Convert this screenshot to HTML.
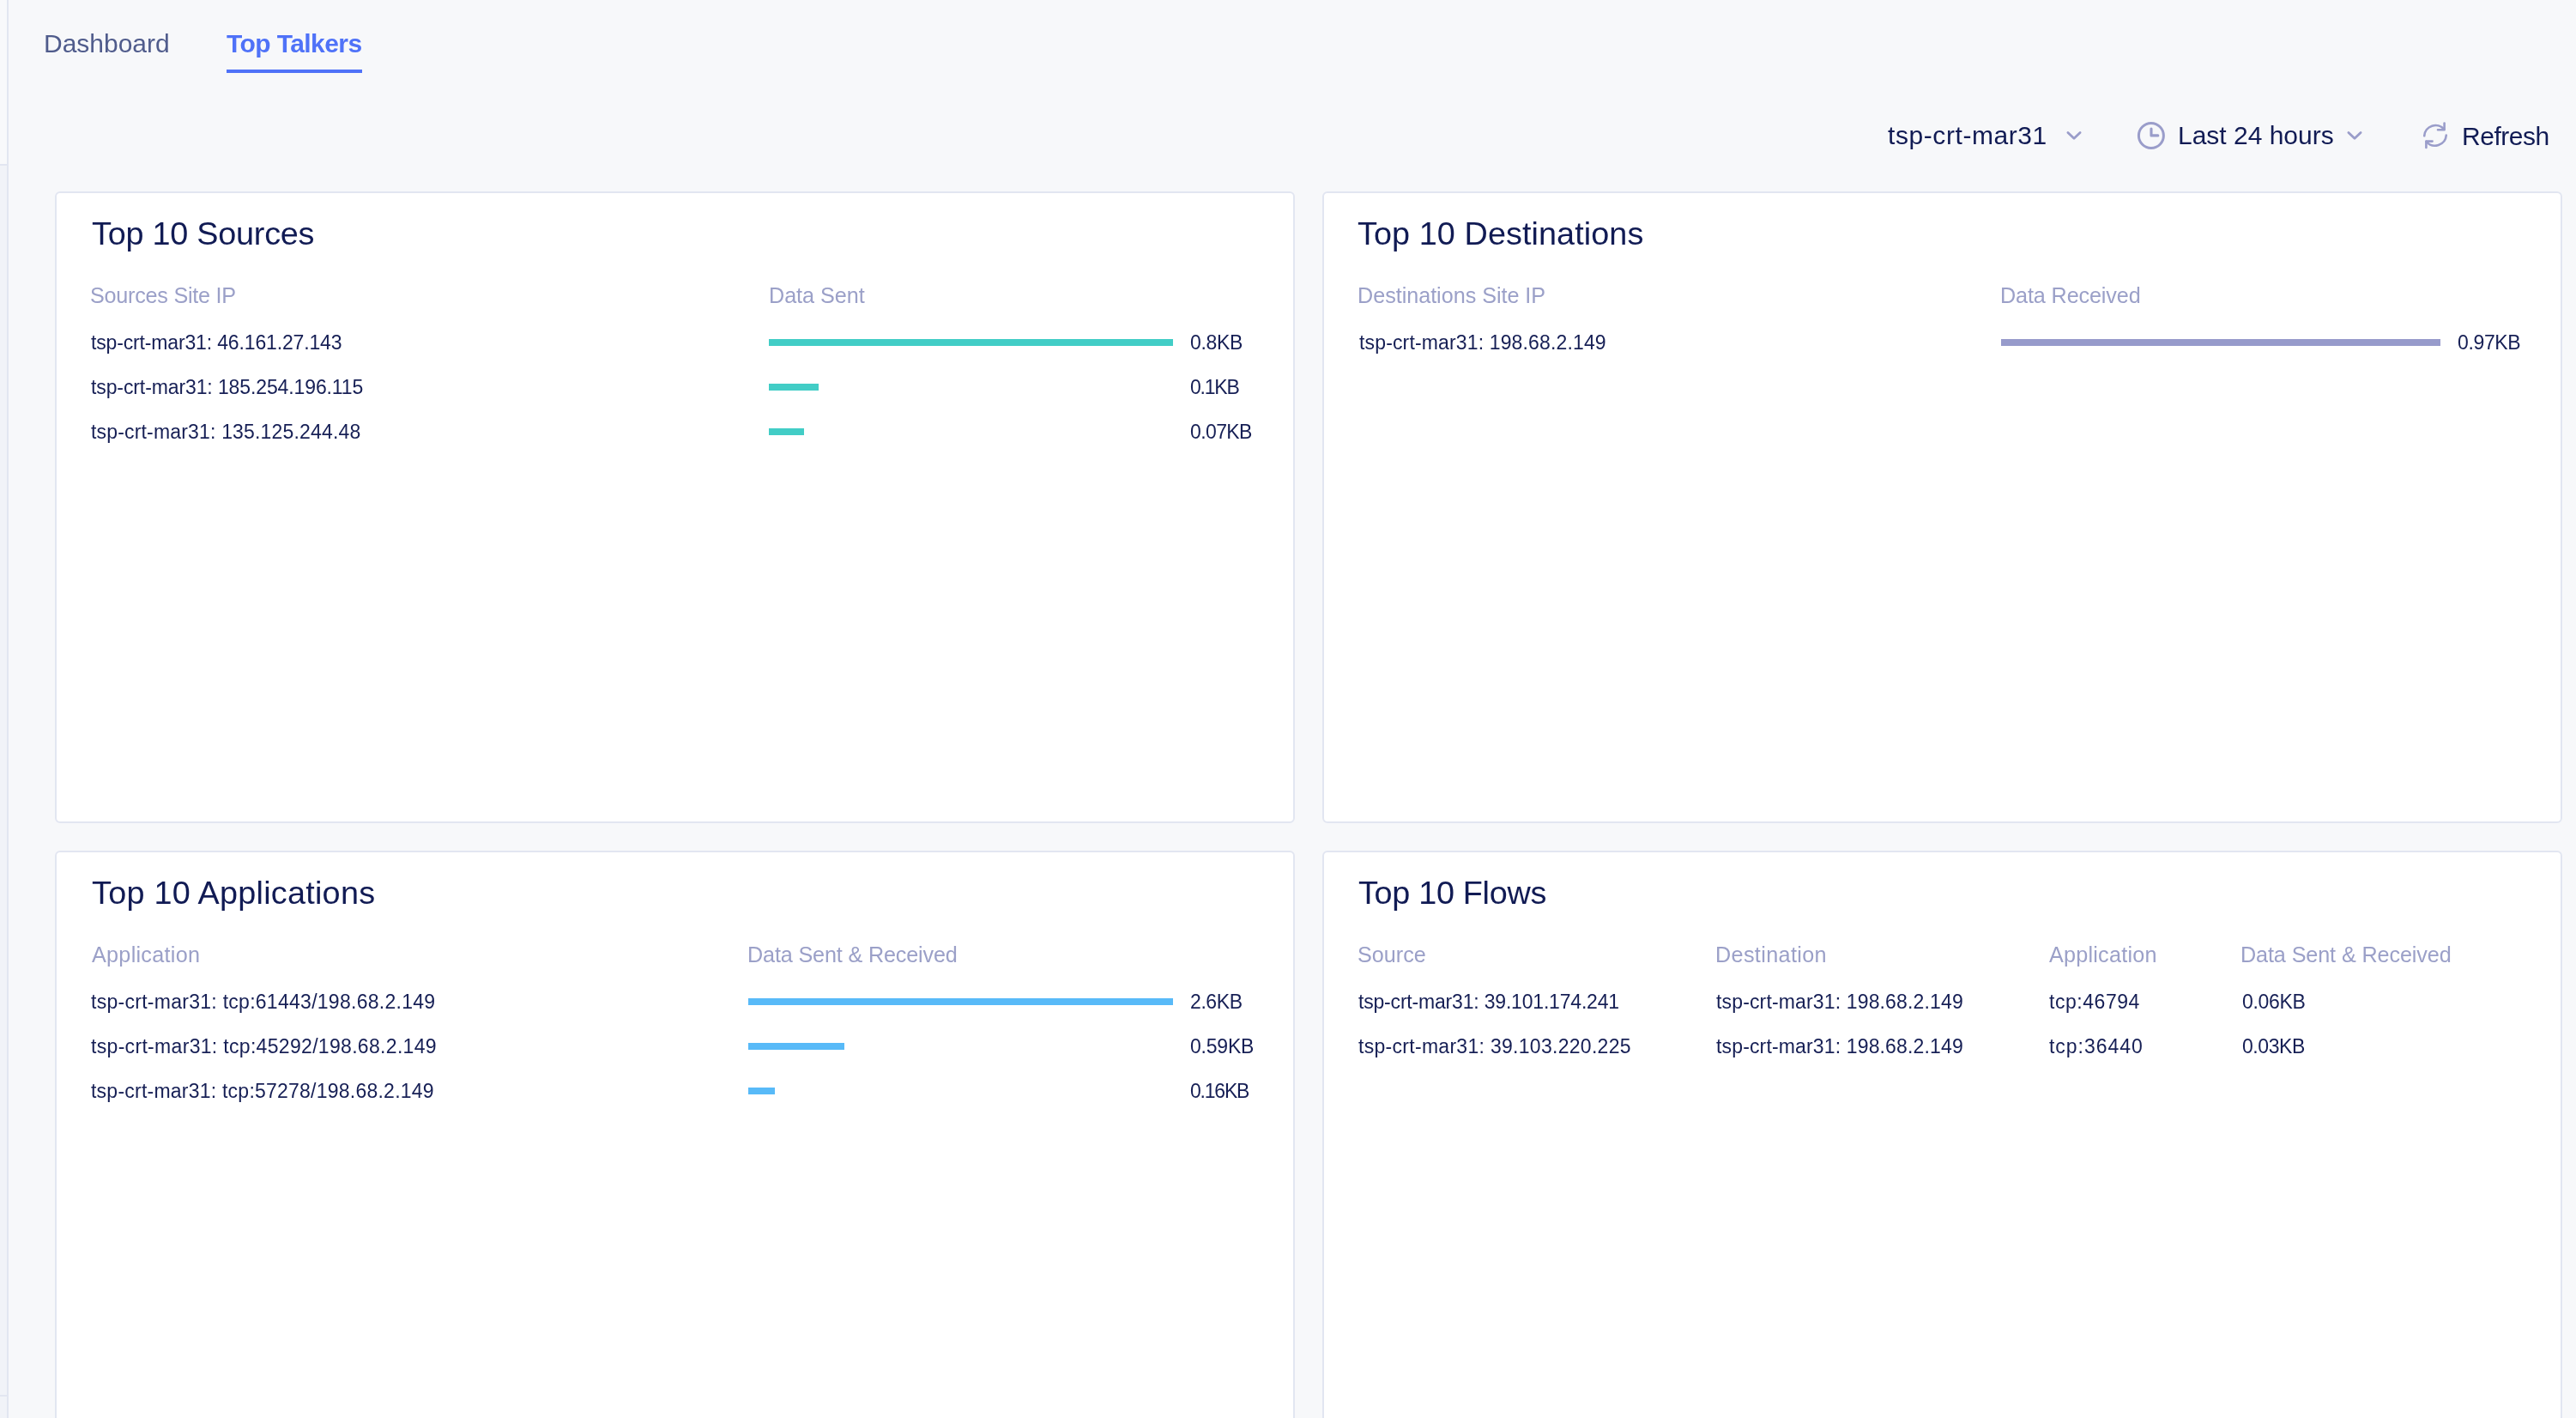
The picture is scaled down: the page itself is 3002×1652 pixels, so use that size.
<!DOCTYPE html>
<html><head><meta charset="utf-8"><title>Top Talkers</title><style>
html,body{margin:0;padding:0;}
body{width:3002px;height:1652px;overflow:hidden;position:relative;background:#f7f8fa;font-family:"Liberation Sans",sans-serif;}
.t{position:absolute;white-space:nowrap;will-change:transform;line-height:normal;font-family:"Liberation Sans",sans-serif;}
.bar{position:absolute;}
.card{position:absolute;box-sizing:border-box;background:#fff;border:2px solid #e2e6f1;border-radius:6px;}
</style></head>
<body>

<div style="position:absolute;left:0;top:0;width:8px;height:192px;background:#f8f9fb"></div>
<div style="position:absolute;left:0;top:192px;width:8px;height:1460px;background:#f1f3f8"></div>
<div style="position:absolute;left:0;top:191px;width:8px;height:2px;background:#e2e6f1"></div>
<div style="position:absolute;left:0;top:1625px;width:8px;height:2px;background:#e2e6f1"></div>
<div style="position:absolute;left:8px;top:0;width:2px;height:1652px;background:#e2e6f1"></div>
<div style="position:absolute;left:264px;top:81px;width:158px;height:4px;background:#4f72f8"></div>
<div class="card" style="left:64px;top:223px;width:1445px;height:736px"></div>
<div class="card" style="left:1541px;top:223px;width:1445px;height:736px"></div>
<div class="card" style="left:64px;top:991px;width:1445px;height:700px"></div>
<div class="card" style="left:1541px;top:991px;width:1445px;height:700px"></div>
<svg style="position:absolute;left:2400px;top:140px" width="35" height="35" viewBox="0 0 35 35"><path d="M9.9 14.4 L17 21.3 L24.1 14.4" fill="none" stroke="#9a9dca" stroke-width="2.8" stroke-linecap="round" stroke-linejoin="round"/></svg>
<svg style="position:absolute;left:2727px;top:140px" width="35" height="35" viewBox="0 0 35 35"><path d="M9.9 14.4 L17 21.3 L24.1 14.4" fill="none" stroke="#9a9dca" stroke-width="2.8" stroke-linecap="round" stroke-linejoin="round"/></svg>
<svg style="position:absolute;left:2480px;top:135px" width="55" height="45" viewBox="0 0 55 45"><circle cx="26.9" cy="23" r="14.5" fill="none" stroke="#9a9dca" stroke-width="3"/><path d="M27 15.1 V22.9 H34.8" fill="none" stroke="#9a9dca" stroke-width="3.1" stroke-linecap="round" stroke-linejoin="round"/></svg>
<svg style="position:absolute;left:2815px;top:135px" width="45" height="45" viewBox="0 0 45 45"><g fill="none" stroke="#9a9dca" stroke-width="2.6" stroke-linecap="round" stroke-linejoin="round"><path d="M10.2 23.3 A13.2 13.2 0 0 1 33.4 15.6"/><path d="M33.6 8.6 V16.2 H26"/><path d="M35.8 22.5 A13.2 13.2 0 0 1 12.6 30"/><path d="M12.4 37 V29.6 H19.6"/></g></svg>
<div class="bar" style="left:896px;top:395px;width:471px;height:8px;background:#42cdc6"></div>
<div class="bar" style="left:896px;top:447px;width:58px;height:8px;background:#42cdc6"></div>
<div class="bar" style="left:896px;top:499px;width:41px;height:8px;background:#42cdc6"></div>
<div class="bar" style="left:2332px;top:395px;width:512px;height:8px;background:#979bcb"></div>
<div class="bar" style="left:872px;top:1163px;width:495px;height:8px;background:#58baf8"></div>
<div class="bar" style="left:872px;top:1215px;width:112px;height:8px;background:#58baf8"></div>
<div class="bar" style="left:872px;top:1267px;width:31px;height:8px;background:#58baf8"></div>
<div class="t" id="t0" style="left:50.81px;top:34.00px;font-size:30px;font-weight:400;color:#505c8c;letter-spacing:-0.008px">Dashboard</div>
<div class="t" id="t1" style="left:264.34px;top:34.00px;font-size:30px;font-weight:700;color:#4f72f8;letter-spacing:-0.584px">Top Talkers</div>
<div class="t" id="t2" style="left:2199.55px;top:141.00px;font-size:30px;font-weight:400;color:#111b54;letter-spacing:0.579px">tsp-crt-mar31</div>
<div class="t" id="t3" style="left:2538.14px;top:141.00px;font-size:30px;font-weight:400;color:#111b54;letter-spacing:-0.011px">Last 24 hours</div>
<div class="t" id="t4" style="left:2869.44px;top:141.50px;font-size:30px;font-weight:400;color:#111b54;letter-spacing:-0.473px">Refresh</div>
<div class="t" id="t5" style="left:106.67px;top:251.00px;font-size:37.8px;font-weight:400;color:#111b54;letter-spacing:-0.243px">Top 10 Sources</div>
<div class="t" id="t6" style="left:1582.41px;top:251.00px;font-size:37.8px;font-weight:400;color:#111b54;letter-spacing:0.075px">Top 10 Destinations</div>
<div class="t" id="t7" style="left:106.67px;top:1019.00px;font-size:37.8px;font-weight:400;color:#111b54;letter-spacing:0.241px">Top 10 Applications</div>
<div class="t" id="t8" style="left:1583.36px;top:1019.00px;font-size:37.8px;font-weight:400;color:#111b54;letter-spacing:-0.306px">Top 10 Flows</div>
<div class="t" id="t9" style="left:105.45px;top:330.00px;font-size:25.2px;font-weight:400;color:#9ba0c8;letter-spacing:-0.246px">Sources Site IP</div>
<div class="t" id="t10" style="left:895.54px;top:330.00px;font-size:25.2px;font-weight:400;color:#9ba0c8;letter-spacing:-0.042px">Data Sent</div>
<div class="t" id="t11" style="left:1582.40px;top:330.00px;font-size:25.2px;font-weight:400;color:#9ba0c8;letter-spacing:-0.035px">Destinations Site IP</div>
<div class="t" id="t12" style="left:2331.01px;top:330.00px;font-size:25.2px;font-weight:400;color:#9ba0c8;letter-spacing:-0.126px">Data Received</div>
<div class="t" id="t13" style="left:106.77px;top:1098.00px;font-size:25.2px;font-weight:400;color:#9ba0c8;letter-spacing:0.273px">Application</div>
<div class="t" id="t14" style="left:871.01px;top:1098.00px;font-size:25.2px;font-weight:400;color:#9ba0c8;letter-spacing:-0.159px">Data Sent &amp; Received</div>
<div class="t" id="t15" style="left:1582.45px;top:1098.00px;font-size:25.2px;font-weight:400;color:#9ba0c8;letter-spacing:0.010px">Source</div>
<div class="t" id="t16" style="left:1998.69px;top:1098.00px;font-size:25.2px;font-weight:400;color:#9ba0c8;letter-spacing:0.356px">Destination</div>
<div class="t" id="t17" style="left:2387.77px;top:1098.00px;font-size:25.2px;font-weight:400;color:#9ba0c8;letter-spacing:0.223px">Application</div>
<div class="t" id="t18" style="left:2611.40px;top:1098.00px;font-size:25.2px;font-weight:400;color:#9ba0c8;letter-spacing:-0.113px">Data Sent &amp; Received</div>
<div class="t" id="t19" style="left:106.39px;top:386.00px;font-size:23px;font-weight:400;color:#161f55;letter-spacing:-0.153px">tsp-crt-mar31: 46.161.27.143</div>
<div class="t" id="t20" style="left:106.39px;top:438.00px;font-size:23px;font-weight:400;color:#161f55;letter-spacing:-0.109px">tsp-crt-mar31: 185.254.196.115</div>
<div class="t" id="t21" style="left:106.39px;top:490.00px;font-size:23px;font-weight:400;color:#161f55;letter-spacing:0.174px">tsp-crt-mar31: 135.125.244.48</div>
<div class="t" id="t22" style="left:1386.58px;top:386.00px;font-size:23px;font-weight:400;color:#161f55;letter-spacing:-0.319px">0.8KB</div>
<div class="t" id="t23" style="left:1386.58px;top:438.00px;font-size:23px;font-weight:400;color:#161f55;letter-spacing:-1.200px">0.1KB</div>
<div class="t" id="t24" style="left:1386.58px;top:490.00px;font-size:23px;font-weight:400;color:#161f55;letter-spacing:-0.616px">0.07KB</div>
<div class="t" id="t25" style="left:1583.65px;top:386.00px;font-size:23px;font-weight:400;color:#161f55;letter-spacing:0.148px">tsp-crt-mar31: 198.68.2.149</div>
<div class="t" id="t26" style="left:2863.88px;top:386.00px;font-size:23px;font-weight:400;color:#161f55;letter-spacing:-0.356px">0.97KB</div>
<div class="t" id="t27" style="left:106.39px;top:1154.00px;font-size:23px;font-weight:400;color:#161f55;letter-spacing:0.274px">tsp-crt-mar31: tcp:61443/198.68.2.149</div>
<div class="t" id="t28" style="left:106.39px;top:1206.00px;font-size:23px;font-weight:400;color:#161f55;letter-spacing:0.316px">tsp-crt-mar31: tcp:45292/198.68.2.149</div>
<div class="t" id="t29" style="left:106.39px;top:1258.00px;font-size:23px;font-weight:400;color:#161f55;letter-spacing:0.232px">tsp-crt-mar31: tcp:57278/198.68.2.149</div>
<div class="t" id="t30" style="left:1386.66px;top:1154.00px;font-size:23px;font-weight:400;color:#161f55;letter-spacing:-0.414px">2.6KB</div>
<div class="t" id="t31" style="left:1386.58px;top:1206.00px;font-size:23px;font-weight:400;color:#161f55;letter-spacing:-0.216px">0.59KB</div>
<div class="t" id="t32" style="left:1386.58px;top:1258.00px;font-size:23px;font-weight:400;color:#161f55;letter-spacing:-1.200px">0.16KB</div>
<div class="t" id="t33" style="left:1583.34px;top:1154.00px;font-size:23px;font-weight:400;color:#161f55;letter-spacing:-0.190px">tsp-crt-mar31: 39.101.174.241</div>
<div class="t" id="t34" style="left:1583.34px;top:1206.00px;font-size:23px;font-weight:400;color:#161f55;letter-spacing:0.292px">tsp-crt-mar31: 39.103.220.225</div>
<div class="t" id="t35" style="left:2000.39px;top:1154.00px;font-size:23px;font-weight:400;color:#161f55;letter-spacing:0.149px">tsp-crt-mar31: 198.68.2.149</div>
<div class="t" id="t36" style="left:2000.39px;top:1206.00px;font-size:23px;font-weight:400;color:#161f55;letter-spacing:0.149px">tsp-crt-mar31: 198.68.2.149</div>
<div class="t" id="t37" style="left:2387.65px;top:1154.00px;font-size:23px;font-weight:400;color:#161f55;letter-spacing:0.544px">tcp:46794</div>
<div class="t" id="t38" style="left:2387.65px;top:1206.00px;font-size:23px;font-weight:400;color:#161f55;letter-spacing:0.981px">tcp:36440</div>
<div class="t" id="t39" style="left:2613.22px;top:1154.00px;font-size:23px;font-weight:400;color:#161f55;letter-spacing:-0.344px">0.06KB</div>
<div class="t" id="t40" style="left:2613.22px;top:1206.00px;font-size:23px;font-weight:400;color:#161f55;letter-spacing:-0.444px">0.03KB</div>
</body></html>
